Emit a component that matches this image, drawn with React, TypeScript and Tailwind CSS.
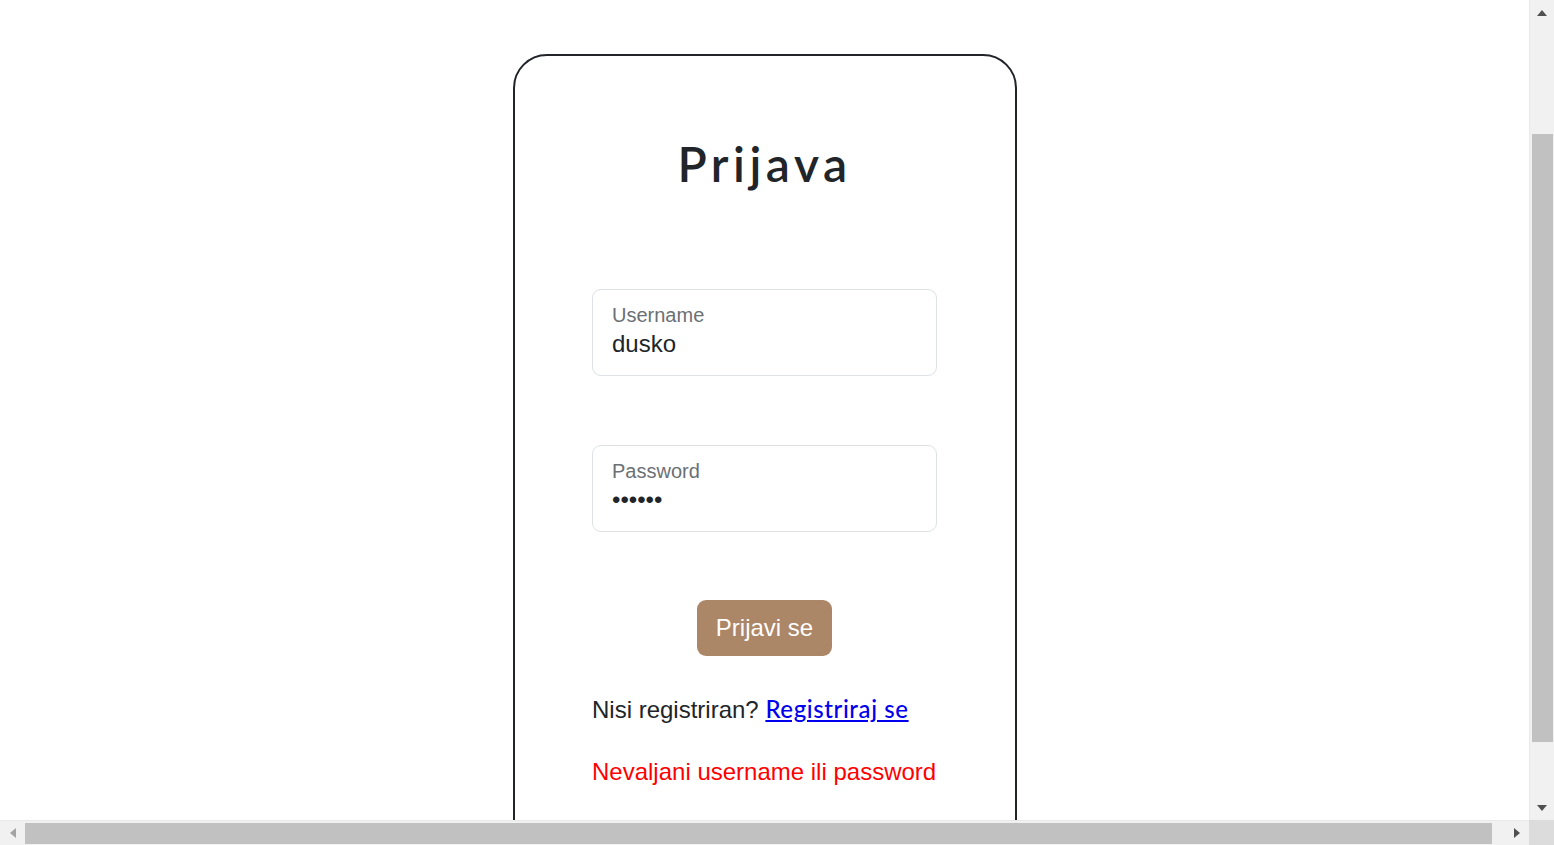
import React from "react";

function FloatField({ label, value }: { label: string; value: string }) {
  return (
    <div className="flex h-[87px] w-[345px] flex-col rounded-[9px] border border-[#dee2e6] bg-white pl-[19px] pt-[15px]">
      <div className="text-[20px] leading-[20px] text-[#6c7074]">{label}</div>
      <div className="mt-[7px] text-[24px] leading-[24px] text-[#212529]">{value}</div>
    </div>
  );
}

export default function App() {
  return (
    <div className="flex h-[845px] w-[1554px] flex-col overflow-hidden bg-white" style={{ fontFamily: '"Liberation Sans", Arial, sans-serif' }}>
      <div className="flex h-[820px] w-full">
        <div className="flex h-[820px] flex-1 justify-center overflow-hidden">
          <div className="mt-[54px] flex h-[900px] w-[504px] flex-col items-center rounded-[34px] border-2 border-[#212529] pt-[84px]">
            <h1
              className="text-[48px] font-semibold leading-[48px] tracking-[4.5px] text-[#212529]"
              style={{ fontFamily: 'Lato, "Open Sans", sans-serif' }}
            >
              Prijava
            </h1>
            <div className="mt-[101px] flex w-[345px] flex-col">
              <FloatField label="Username" value="dusko" />
              <div className="mt-[69px]">
                <FloatField label="Password" value="••••••" />
              </div>
              <div className="mt-[68px] flex justify-center">
                <button className="h-[56px] rounded-[9px] bg-[#ab8667] px-[19px] text-[24px] leading-[36px] text-white">
                  Prijavi se
                </button>
              </div>
              <p className="mt-[35px] text-[24px] leading-[36px] text-[#212529]">
                Nisi registriran?{" "}
                <a
                  href="#"
                  className="text-[24px] font-medium tracking-[0.6px] text-[#0000ee] underline"
                  style={{ fontFamily: 'Lato, "Open Sans", sans-serif' }}
                >
                  Registriraj se
                </a>
              </p>
              <p className="mt-[26px] text-[24px] leading-[36px] text-[#ff0000]">Nevaljani username ili password</p>
            </div>
          </div>
        </div>
        {/* vertical scrollbar */}
        <div className="flex h-[820px] w-[25px] flex-col items-center border-l border-[#e9e9e9] bg-[#f1f1f1]">
          <div className="flex h-[25px] w-full items-center justify-center">
            <svg width="10" height="6" viewBox="0 0 10 6">
              <polygon points="5,0 10,6 0,6" fill="#505050" />
            </svg>
          </div>
          <div className="h-[109px]" />
          <div className="h-[608px] w-[21px] bg-[#c1c1c1]" />
          <div className="flex-1" />
          <div className="flex h-[25px] w-full items-center justify-center">
            <svg width="10" height="6" viewBox="0 0 10 6">
              <polygon points="0,0 10,0 5,6" fill="#505050" />
            </svg>
          </div>
        </div>
      </div>
      {/* horizontal scrollbar */}
      <div className="flex h-[25px] w-full">
        <div className="flex flex-1 items-center border-t border-[#e9e9e9] bg-[#f1f1f1]">
          <div className="flex h-[25px] w-[25px] items-center justify-center">
            <svg width="6" height="10" viewBox="0 0 6 10">
              <polygon points="6,0 6,10 0,5" fill="#a3a3a3" />
            </svg>
          </div>
          <div className="h-[21px] w-[1467px] bg-[#c1c1c1]" />
          <div className="flex-1" />
          <div className="flex h-[25px] w-[25px] items-center justify-center">
            <svg width="6" height="10" viewBox="0 0 6 10">
              <polygon points="0,0 6,5 0,10" fill="#505050" />
            </svg>
          </div>
        </div>
        <div className="h-[25px] w-[25px] bg-[#dcdcdc]" />
      </div>
    </div>
  );
}
